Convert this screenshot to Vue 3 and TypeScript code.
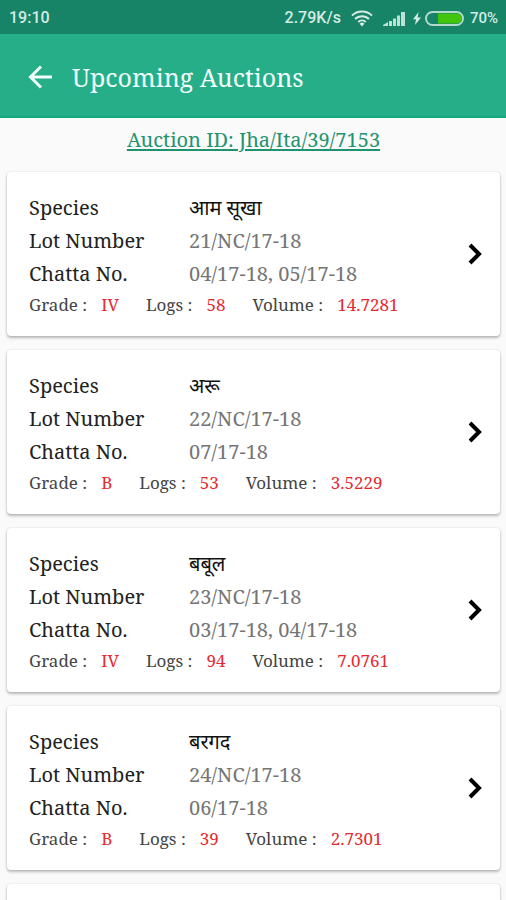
<script setup lang="ts">
interface Lot {
  species: string
  lotNumber: string
  chatta: string
  grade: string
  logs: number
  volume: string
}

const auctionId = 'Jha/Ita/39/7153'

const lots: Lot[] = [
  { species: 'आम सूखा', lotNumber: '21/NC/17-18', chatta: '04/17-18, 05/17-18', grade: 'IV', logs: 58, volume: '14.7281' },
  { species: 'अरू', lotNumber: '22/NC/17-18', chatta: '07/17-18', grade: 'B', logs: 53, volume: '3.5229' },
  { species: 'बबूल', lotNumber: '23/NC/17-18', chatta: '03/17-18, 04/17-18', grade: 'IV', logs: 94, volume: '7.0761' },
  { species: 'बरगद', lotNumber: '24/NC/17-18', chatta: '06/17-18', grade: 'B', logs: 39, volume: '2.7301' },
]
</script>

<template>
  <div class="screen">
    <div class="status-bar">
      <span class="clock">19:10</span>
      <span class="speed">2.79K/s</span>
      <svg class="wifi" width="22" height="17" viewBox="0 0 22 17" aria-hidden="true">
        <path d="M1 5.600a14.400 14.400 0 0 1 20 0M4 9a10 10 0 0 1 14 0M7.200 12a5.600 5.600 0 0 1 7.600 0" />
        <path class="solid" d="M11 16.400 8.600 13.800a3.400 3.400 0 0 1 4.800 0z" />
      </svg>
      <svg class="signal" width="22" height="15" viewBox="0 0 22 15" aria-hidden="true">
        <path d="M0 15v-1l5-3v4zM6 10h3v5H6zM10 7.500h3V15h-3zM14 4.500h3V15h-3zM18 1h4v14h-4z" />
      </svg>
      <svg class="bolt" width="8" height="13" viewBox="0 0 8 13" aria-hidden="true">
        <path d="M5.500 0 0 7.200h3L2 13l6-7.600H4.600z" />
      </svg>
      <svg class="battery" width="39" height="15" viewBox="0 0 39 15" aria-hidden="true">
        <rect class="case" x="1" y="1" width="37" height="13" rx="6.500" />
        <path class="charge" d="M13 2.500h19a5 5 0 0 1 0 10H13z" />
      </svg>
      <span class="percent">70%</span>
    </div>

    <header class="app-bar">
      <button type="button" class="back" aria-label="Back">
        <svg width="26" height="26" viewBox="0 0 26 26" aria-hidden="true">
          <path d="M24 13H3M13 2.500 2.500 13 13 23.500" />
        </svg>
      </button>
      <h1>Upcoming Auctions</h1>
    </header>

    <main>
      <a class="auction-id" href="#lots">Auction ID: {{ auctionId }}</a>

      <ul id="lots" class="lots">
        <li v-for="lot in lots" :key="lot.lotNumber" class="card">
          <div class="details">
            <dl class="fields">
              <dt>Species</dt>
              <dd class="species" lang="hi">{{ lot.species }}</dd>
              <dt>Lot Number</dt>
              <dd>{{ lot.lotNumber }}</dd>
              <dt>Chatta No.</dt>
              <dd>{{ lot.chatta }}</dd>
            </dl>
            <dl class="stats">
              <div><dt>Grade :</dt><dd>{{ lot.grade }}</dd></div>
              <div><dt>Logs :</dt><dd>{{ lot.logs }}</dd></div>
              <div><dt>Volume :</dt><dd>{{ lot.volume }}</dd></div>
            </dl>
          </div>
          <button type="button" class="open" :aria-label="`Open lot ${lot.lotNumber}`">
            <svg width="14" height="22" viewBox="0 0 14 22" aria-hidden="true">
              <path d="m2 2 9 9-9 9" />
            </svg>
          </button>
        </li>
        <li class="card" aria-hidden="true"></li>
      </ul>
    </main>
  </div>
</template>

<style>
body {
  background: #fafafa;
}
</style>

<style scoped>
.screen {
  height: 100vh;
  display: flex;
  flex-direction: column;
  overflow: hidden;
  background: #fafafa;
  color: #222;
  font-family: "Noto Serif", "Noto Sans Devanagari", "Liberation Serif", serif;
}

.status-bar {
  flex: none;
  display: flex;
  align-items: center;
  height: 34px;
  box-sizing: border-box;
  padding: 2px 8px 0 9px;
  background: #178467;
  color: #d5ebe4;
  font: 500 16px/20px Roboto, "Liberation Sans", sans-serif;
}

.clock {
  margin-right: auto;
}

.wifi {
  margin-left: 10px;
  fill: none;
  stroke: #d5ebe4;
  stroke-width: 2;
}

.wifi .solid {
  fill: #d5ebe4;
  stroke: none;
}

.signal {
  margin-left: 10px;
  fill: #bfe0d5;
}

.bolt {
  margin-left: 8px;
  fill: #d5ebe4;
}

.battery {
  margin: 0 6px 0 4px;
}

.case {
  fill: none;
  stroke: #b5d8cd;
  stroke-width: 2;
}

.charge {
  fill: #43c40c;
}

.percent {
  font-size: 15px;
}

.app-bar {
  flex: none;
  display: flex;
  align-items: center;
  gap: 18px;
  height: 84px;
  box-sizing: border-box;
  padding: 2px 28px 0;
  box-shadow: inset 0 -2px #16a67e;
  background: #26ae88;
  color: #f2fffb;
}

button {
  flex: none;
  display: flex;
  padding: 0;
  border: 0;
  background: none;
  cursor: pointer;
}

.back svg {
  fill: none;
  stroke: #f2fffb;
  stroke-width: 3;
}

h1 {
  margin: 0;
  font-size: 25px;
  font-weight: 400;
  line-height: 36px;
}

main {
  display: flex;
  flex-direction: column;
  padding: 8px 6px 0 7px;
}

.auction-id {
  align-self: center;
  color: #1f9270;
  font-size: 20px;
  line-height: 28px;
  text-underline-offset: 2px;
}

.lots {
  display: flex;
  flex-direction: column;
  gap: 14px;
  margin: 18px 0 0;
  padding: 0;
  list-style: none;
}

.card {
  display: flex;
  align-items: center;
  justify-content: space-between;
  box-sizing: border-box;
  min-height: 164px;
  padding: 0 18px 0 22px;
  border-radius: 4px;
  background: #fff;
  box-shadow: 0 2px 3px rgba(0, 0, 0, 0.26), 0 0 2px rgba(0, 0, 0, 0.14);
}

.details {
  padding: 19px 0 17px;
}

dl,
dd {
  margin: 0;
}

.fields {
  display: grid;
  grid-template-columns: 160px 1fr;
  font-size: 20px;
  line-height: 33px;
}

.fields dd {
  color: #757575;
}

.fields .species {
  color: #111;
}

.stats {
  display: flex;
  gap: 27px;
  font-size: 17px;
  line-height: 29px;
}

.stats div {
  display: flex;
  gap: 14px;
}

.stats dt {
  color: #444;
}

.stats dd {
  color: #e52a2f;
}

.open svg {
  fill: none;
  stroke: #000;
  stroke-width: 4;
}
</style>
